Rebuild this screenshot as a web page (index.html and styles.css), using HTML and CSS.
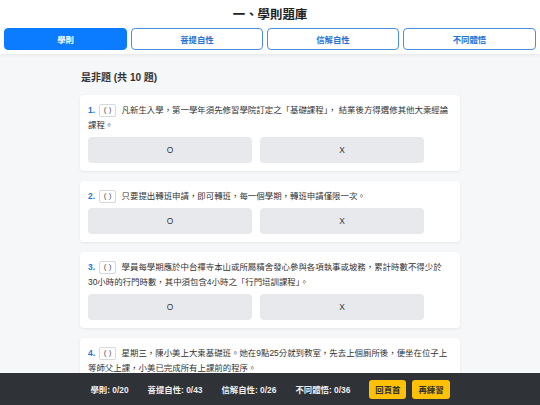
FILE: index.html
```html
<!DOCTYPE html>
<html lang="zh-Hant">
<head>
<meta charset="utf-8">
<title>一、學則題庫</title>
<link rel="stylesheet" href="styles.css">
</head>
<body>
<header class="top">
  <h1 class="title">一、學則題庫</h1>
  <nav class="tabs">
    <button class="tab active">學則</button>
    <button class="tab">菩提自性</button>
    <button class="tab">信解自性</button>
    <button class="tab">不同體悟</button>
  </nav>
</header>
<main class="main">
  <h2 class="section">是非題 (共 10 題)</h2>
  <div class="card">
    <div class="q"><span class="num">1.</span><span class="paren">( )</span><span class="txt">凡新生入學，第一學年須先修習學院訂定之「基礎課程<span class="kern">」</span>， 結業後方得選修其他大乘經論課程。</span></div>
    <div class="answers"><button class="ans">O</button><button class="ans">X</button></div>
  </div>
  <div class="card">
    <div class="q"><span class="num">2.</span><span class="paren">( )</span><span class="txt">只要提出轉班申請，即可轉班，每一個學期，轉班申請僅限一次。</span></div>
    <div class="answers"><button class="ans">O</button><button class="ans">X</button></div>
  </div>
  <div class="card">
    <div class="q"><span class="num">3.</span><span class="paren">( )</span><span class="txt">學員每學期應於中台禪寺本山或所屬精舍發心參與各項執事或坡務，累計時數不得少於30小時的行門時數，其中須包含4小時之「行門培訓課程<span class="kern">」</span>。</span></div>
    <div class="answers"><button class="ans">O</button><button class="ans">X</button></div>
  </div>
  <div class="card">
    <div class="q"><span class="num">4.</span><span class="paren">( )</span><span class="txt">星期三，陳小美上大乘基礎班。她在9點25分就到教室，先去上個廁所後，便坐在位子上等師父上課，小美已完成所有上課前的程序。</span></div>
    <div class="answers"><button class="ans">O</button><button class="ans">X</button></div>
  </div>
</main>
<footer class="bar">
  <span class="stat">學則: 0/20</span>
  <span class="stat">菩提自性: 0/43</span>
  <span class="stat">信解自性: 0/26</span>
  <span class="stat">不同體悟: 0/36</span>
  <div class="actions">
    <button class="act">回頁首</button>
    <button class="act">再練習</button>
  </div>
</footer>
</body>
</html>
```
FILE: styles.css
```css
* { box-sizing: border-box; }
html, body { margin: 0; padding: 0; }
body {
  font-family: "Liberation Sans", "Noto Sans CJK TC", sans-serif;
  font-size: 8.4px;
  color: #333;
  background: #f6f7f9;
  width: 540px;
  height: 405px;
  overflow: hidden;
}
button { font-family: inherit; }
.top {
  background: #fff;
  padding: 6.5px 4px 4px;
  box-shadow: 0 1px 4px rgba(0,0,0,0.08);
  position: relative;
}
.title {
  margin: 0 0 4.5px;
  font-size: 12.4px;
  line-height: 17px;
  text-align: center;
  font-weight: bold;
  color: #222;
}
.tabs {
  display: grid;
  grid-template-columns: 123px 132px 132px 133px;
  gap: 4px;
}
.tab {
  height: 22px;
  border: 1px solid #4a8fdc;
  border-radius: 4px;
  background: #fff;
  color: #1f74d6;
  font-size: 8.4px;
  font-weight: bold;
  padding: 0;
}
.tab.active {
  background: #0b7bff;
  border-color: #0b7bff;
  color: #fff;
}
.main {
  width: 380px;
  margin: 0 auto;
  padding-top: 17px;
}
.section {
  margin: 0 0 10px 1px;
  font-size: 10px;
  line-height: 14px;
  font-weight: bold;
  color: #333;
}
.card {
  background: #fff;
  border-radius: 4px;
  box-shadow: 0 1px 3px rgba(0,0,0,0.07);
  padding: 7.5px 10px 7.5px 8px;
  margin-bottom: 10.5px;
}
.q {
  margin: 0 0 4.5px;
  font-size: 8.43px;
  line-height: 15px;
  color: #333;
}
.kern { margin-right: -4.2px; }
.num {
  color: #1f74d6;
  font-weight: bold;
  margin-right: 4px;
}
.paren {
  display: inline-block;
  width: 17px;
  height: 12.5px;
  line-height: 10.5px;
  border: 1px solid #d6d8dc;
  border-radius: 2px;
  text-align: center;
  color: #555;
  margin-right: 5.5px;
  vertical-align: middle;
  font-size: 8px;
}
.answers {
  display: grid;
  grid-template-columns: 164px 164px;
  gap: 8px;
}
.ans {
  height: 26px;
  border: none;
  border-radius: 4px;
  background: #e8e9ed;
  color: #333;
  font-size: 8.4px;
  padding: 0;
}
.bar {
  position: fixed;
  left: 0;
  right: 0;
  bottom: 0;
  height: 32px;
  background: #2f3237;
  display: flex;
  align-items: center;
  justify-content: center;
  gap: 19px;
  color: #eee;
  font-weight: bold;
}
.actions {
  display: flex;
  gap: 6px;
}
.act {
  height: 19px;
  padding: 0 6px;
  border: none;
  border-radius: 3px;
  background: #ffc107;
  color: #333;
  font-size: 8.4px;
  font-weight: bold;
}
```
